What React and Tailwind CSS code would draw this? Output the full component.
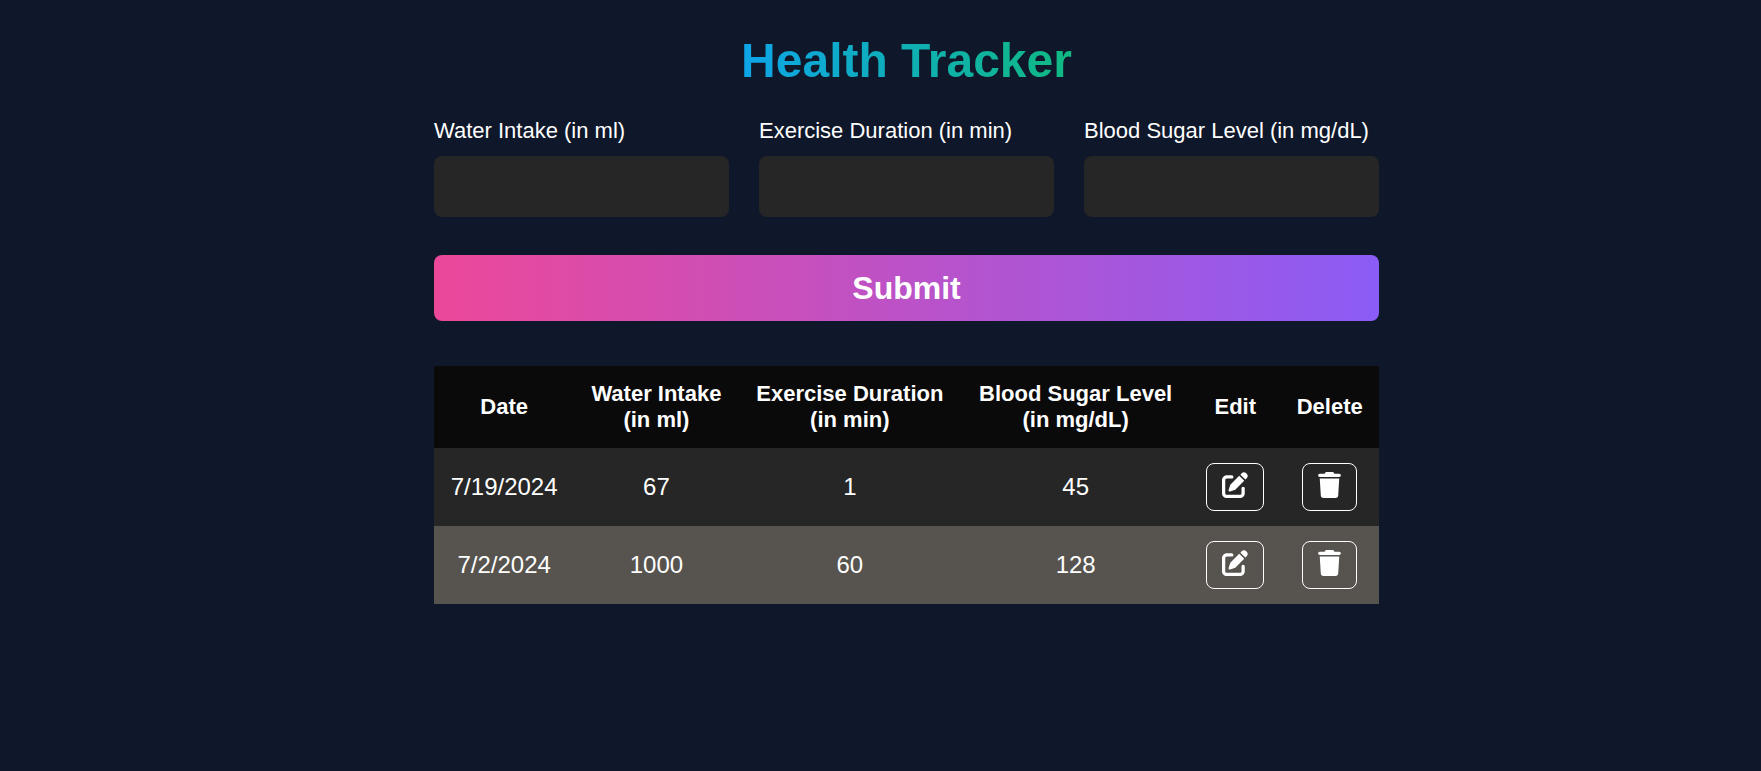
import { FaPenToSquare, FaTrash } from "react-icons/fa6";

const fields = [
  { id: "water", label: "Water Intake (in ml)" },
  { id: "exercise", label: "Exercise Duration (in min)" },
  { id: "sugar", label: "Blood Sugar Level (in mg/dL)" },
];

const columns = [
  ["Date"],
  ["Water Intake", "(in ml)"],
  ["Exercise Duration", "(in min)"],
  ["Blood Sugar Level", "(in mg/dL)"],
  ["Edit"],
  ["Delete"],
];

const entries = [
  { date: "7/19/2024", water: 67, exercise: 1, sugar: 45 },
  { date: "7/2/2024", water: 1000, exercise: 60, sugar: 128 },
];

function IconButton({ label, children }) {
  return (
    <button
      type="button"
      aria-label={label}
      className="inline-flex h-12 items-start rounded-lg border border-white px-[15px] pt-2 align-top text-[26px]"
    >
      {children}
    </button>
  );
}

export default function App() {
  return (
    <div className="min-h-screen bg-[#0f172a] pl-[52px] font-['Liberation_Sans',Arial,sans-serif] text-white">
      <main className="mx-auto flex max-w-[945px] flex-col pt-[33px]">
        <h1 className="self-center bg-linear-to-r/srgb from-[#0ea5e9] to-[#10b981] bg-clip-text text-5xl leading-[56px] font-bold text-transparent">
          Health Tracker
        </h1>

        <form className="mt-[29px]" onSubmit={(e) => e.preventDefault()}>
          <div className="grid grid-cols-3 gap-[30px]">
            {fields.map((f) => (
              <div key={f.id} className="flex flex-col gap-3">
                <label htmlFor={f.id} className="text-[22px] leading-[26px] whitespace-nowrap">
                  {f.label}
                </label>
                <input
                  id={f.id}
                  type="text"
                  className="h-[61px] w-full rounded-lg bg-[#262626] px-4 text-[22px] outline-none"
                />
              </div>
            ))}
          </div>
          <button
            type="submit"
            className="mt-[38px] h-[66px] w-full rounded-lg bg-linear-to-r/srgb from-[#ec4899] to-[#8b5cf6] text-[32px] font-bold"
          >
            Submit
          </button>
        </form>

        <table className="mt-[45px] w-full text-center">
          <thead className="bg-[#0a0a0a] text-[22px] leading-[26px]">
            <tr>
              {columns.map((lines) => (
                <th key={lines[0]} scope="col" className="p-[15px] font-bold whitespace-nowrap">
                  {lines.map((line) => (
                    <span key={line} className="block">
                      {line}
                    </span>
                  ))}
                </th>
              ))}
            </tr>
          </thead>
          <tbody className="text-2xl">
            {entries.map((e) => (
              <tr key={e.date} className="odd:bg-[#262626] even:bg-[#57534e]">
                <td className="p-[15px]">{e.date}</td>
                <td className="p-[15px]">{e.water}</td>
                <td className="p-[15px]">{e.exercise}</td>
                <td className="p-[15px]">{e.sugar}</td>
                <td className="p-[15px]">
                  <IconButton label={`Edit ${e.date}`}>
                    <FaPenToSquare />
                  </IconButton>
                </td>
                <td className="p-[15px]">
                  <IconButton label={`Delete ${e.date}`}>
                    <FaTrash className="h-[26px] w-[23px]" />
                  </IconButton>
                </td>
              </tr>
            ))}
          </tbody>
        </table>
      </main>
    </div>
  );
}
